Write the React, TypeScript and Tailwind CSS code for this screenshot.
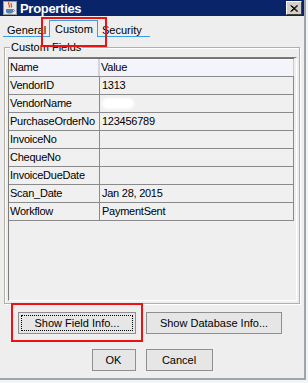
import React from 'react';

const ROWS: { name: string; value: string; blur?: boolean }[] = [
  { name: 'VendorID',        value: '1313' },
  { name: 'VendorName',      value: '', blur: true },
  { name: 'PurchaseOrderNo', value: '123456789' },
  { name: 'InvoiceNo',       value: '' },
  { name: 'ChequeNo',        value: '' },
  { name: 'InvoiceDueDate',  value: '' },
  { name: 'Scan_Date',       value: 'Jan 28, 2015' },
  { name: 'Workflow',        value: 'PaymentSent' },
];

function JavaIcon() {
  return (
    <svg width="14" height="14" viewBox="0 0 14 14">
      <rect x="0" y="0" width="14" height="14" fill="#e8e8e8" />
      <rect x="0.5" y="0.5" width="13" height="13" fill="none" stroke="#9a9a9a" />
      <path d="M6 1 C4 3 8 4 6 6.5 M8.5 2 C7 3.5 10 4.5 8 6.5" stroke="#e4531b" strokeWidth="1.3" fill="none" />
      <path d="M3 8 H10 V10.5 C10 12 8.5 12.5 6.5 12.5 C4.5 12.5 3 12 3 10.5 Z" fill="#5b7fb0" />
      <path d="M10 8.5 C12 8.5 12 10.5 10 10.5" stroke="#5b7fb0" strokeWidth="1" fill="none" />
    </svg>
  );
}

function CloseButton() {
  return (
    <div className="w-[16px] h-[14px] bg-[#d4d0c8] border border-t-white border-l-white border-r-[#404040] border-b-[#404040] flex items-center justify-center">
      <svg width="8" height="7" viewBox="0 0 8 7">
        <path d="M0.5 0.5 L7 6.5 M7 0.5 L0.5 6.5 M1.5 0.5 L8 6.5 M8 0.5 L1.5 6.5" stroke="#000" strokeWidth="1" />
      </svg>
    </div>
  );
}

function Button({ label, focused, w }: { label: string; focused?: boolean; w: string }) {
  return (
    <div className={`${w} h-[22px] bg-[#e6e6e6] border border-[#8f8f8f] p-[2px]`}>
      <div className={`h-full flex items-center justify-center text-[11px] text-black ${focused ? 'border border-dotted border-black' : ''}`}>
        {label}
      </div>
    </div>
  );
}

export default function App() {
  return (
    <div className="w-[308px] h-[383px] bg-[#f2f5f8] overflow-hidden font-['Liberation_Sans',Arial,sans-serif] text-black">
      <div className="relative w-[306px] h-[380px] bg-[#eeeeee] border-r-2 border-b-2 border-[#a3a3a3] flex flex-col">

        {/* Title bar */}
        <div className="h-[16px] bg-[#0a246a] flex items-center pl-[3px] pr-[2px]">
          <JavaIcon />
          <span className="ml-[3px] text-white font-bold text-[13px] leading-none tracking-[-0.3px]">Properties</span>
          <div className="ml-auto">
            <CloseButton />
          </div>
        </div>

        {/* Tabs */}
        <div className="h-[21px] flex items-end pl-[3px] text-[11px]">
          <div className="w-[46px] h-[13px] pl-[4px] leading-[12px] border-b border-[#3a9de8]">General</div>
          <div className="w-[49px] h-[17px] pl-[5px] pt-[2px] leading-[12px] border-l border-t border-r border-[#3a9de8]">Custom</div>
          <div className="w-[52px] h-[13px] pl-[4px] leading-[12px] border-b border-[#3a9de8]">Security</div>
        </div>

        {/* Custom Fields group */}
        <div className="relative mx-[4px] mt-[10px] w-[296px] h-[257px] border border-[#b3afa2] shadow-[inset_1px_1px_0_#fff,1px_1px_0_#fff] pt-[9px] pl-[3px]">
          <span className="absolute -top-[7px] left-[5px] px-[1px] bg-[#eeeeee] text-[11px] leading-[12px]">Custom Fields</span>

          <div className="w-[289px] h-[244px] border border-t-[#7c7c7c] border-l-[#7c7c7c] border-r-white border-b-white bg-[#efefef]">
            <div className="w-[285px] text-[11px] tracking-[-0.25px]">
              <div className="flex h-[19px] bg-[#f4f4fd] border-t border-[#6f6f6f] border-b border-b-[#8a8a8a] shadow-[inset_0_1px_0_#fff]">
                <div className="w-[91px] pl-[1px] leading-[17px] border-r-2 border-[#d3d3e6]">Name</div>
                <div className="flex-1 pl-[1px] leading-[17px] border-r border-[#c8c8d8]">Value</div>
              </div>
              {ROWS.map(r => (
                <div key={r.name} className="flex h-[18px] bg-[#f0f0f0] border-b border-[#8a8a8a]">
                  <div className="w-[91px] pl-[1px] leading-[17px] border-r border-[#8a8a8a] whitespace-nowrap overflow-hidden">{r.name}</div>
                  <div className="flex-1 pl-[2px] leading-[17px] border-r border-[#8a8a8a] whitespace-nowrap overflow-hidden">
                    {r.blur ? (
                      <span className="inline-block mt-[3px] w-[32px] h-[11px] rounded-full bg-white blur-[1px] align-top" />
                    ) : r.value}
                  </div>
                </div>
              ))}
            </div>
          </div>
        </div>

        {/* Info buttons */}
        <div className="mt-[8px] flex justify-center gap-[10px] pr-[4px]">
          <Button label="Show Field Info..." focused w="w-[118px]" />
          <Button label="Show Database Info..." w="w-[136px]" />
        </div>

        {/* OK / Cancel */}
        <div className="mt-[15px] flex justify-center gap-[10px]">
          <Button label="OK" w="w-[44px]" />
          <Button label="Cancel" w="w-[67px]" />
        </div>

        {/* annotation boxes */}
        <div className="absolute left-[41px] top-[17px] w-[66px] h-[30px] border-2 border-[#ee1111]" />
        <div className="absolute left-[11px] top-[303px] w-[132px] h-[39px] border-2 border-[#ee1111]" />
      </div>
    </div>
  );
}
